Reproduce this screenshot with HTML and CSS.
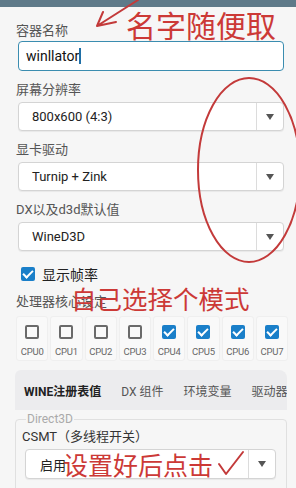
FILE: index.html
```html
<!DOCTYPE html>
<html lang="zh">
<head>
  <meta charset="UTF-8" />
  <meta name="viewport" content="width=device-width, initial-scale=1.0"/>
  <title>Container Settings</title>
  <link rel="stylesheet" href="styles.css">
</head>
<body>

  <div class="topbar"></div>

  <div class="settings">
    <div class="field-label first">容器名称</div>
    <div class="text-input">winllator<span class="caret"></span></div>

    <div class="field-label">屏幕分辨率</div>
    <div class="select"><span class="select-value">800x600 (4:3)</span><span class="select-arrow"></span></div>

    <div class="field-label">显卡驱动</div>
    <div class="select"><span class="select-value">Turnip + Zink</span><span class="select-arrow"></span></div>

    <div class="field-label">DX以及d3d默认值</div>
    <div class="select"><span class="select-value">WineD3D</span><span class="select-arrow"></span></div>

    <div class="check-row">
      <span class="checkbox checked"></span>
      <span class="check-text">显示帧率</span>
    </div>

    <div class="field-label cpu-title">处理器核心设定</div>
    <div class="cpu-grid">
      <div class="cpu-cell"><span class="checkbox"></span><span class="cpu-name">CPU0</span></div>
      <div class="cpu-cell"><span class="checkbox"></span><span class="cpu-name">CPU1</span></div>
      <div class="cpu-cell"><span class="checkbox"></span><span class="cpu-name">CPU2</span></div>
      <div class="cpu-cell"><span class="checkbox"></span><span class="cpu-name">CPU3</span></div>
      <div class="cpu-cell"><span class="checkbox checked"></span><span class="cpu-name">CPU4</span></div>
      <div class="cpu-cell"><span class="checkbox checked"></span><span class="cpu-name">CPU5</span></div>
      <div class="cpu-cell"><span class="checkbox checked"></span><span class="cpu-name">CPU6</span></div>
      <div class="cpu-cell"><span class="checkbox checked"></span><span class="cpu-name">CPU7</span></div>
    </div>

    <div class="tabs">
      <span class="tab active">WINE注册表值</span>
      <span class="tab">DX 组件</span>
      <span class="tab">环境变量</span>
      <span class="tab">驱动器(</span>
    </div>

    <fieldset class="group">
      <legend>Direct3D</legend>
      <div class="group-label">CSMT（多线程开关）</div>
      <div class="select small"><span class="select-value">启用</span><span class="select-arrow"></span></div>
    </fieldset>
  </div>

  <!-- hand-drawn notes on top of the screenshot -->
  <svg class="marks" width="296" height="488" viewBox="0 0 296 488">
    <path d="M138 0 L97 26 M97 26 L116 22 M97 26 L103 12" />
    <ellipse cx="249" cy="170" rx="51" ry="92" />
    <path d="M219 464 L226 474 L243 452" />
  </svg>
  <div class="note note-name">名字随便取</div>
  <div class="note note-mode">自己选择个模式</div>
  <div class="note note-click">设置好后点击</div>

</body>
</html>
```

FILE: styles.css
```css
body {
  margin: 0;
  width: 296px;
  height: 488px;
  overflow: hidden;
  position: relative;
  background: #f6f6f6;
  font-family: Roboto, "Noto Sans CJK SC", sans-serif;
  color: #333;
}

.topbar {
  height: 7px;
  background: #5f7a89;
}

.settings {
  padding: 0 9px 0 16px;
}

.field-label {
  font-size: 13px;
  line-height: 16px;
  color: #555;
  margin-top: 11px;
}

.field-label.first {
  margin-top: 16px;
}

.text-input {
  margin: 2px 0 0 2px;
  width: 266px;
  height: 30px;
  box-sizing: border-box;
  border: 1px solid #3b8db0;
  border-radius: 4px;
  background: #fff;
  padding-left: 7px;
  font-size: 14px;
  line-height: 28px;
  color: #111;
  display: flex;
  align-items: center;
}

.caret {
  display: inline-block;
  width: 2px;
  height: 16px;
  background: #1f6fa6;
}

.select {
  margin: 4px 0 0 2px;
  width: 266px;
  height: 29px;
  box-sizing: border-box;
  border: 1px solid #d4d4d4;
  border-radius: 4px;
  background: #fff;
  box-shadow: 0 1px 1px rgba(0,0,0,0.06);
  display: flex;
  align-items: center;
}

.select-value {
  flex: 1;
  padding-left: 13px;
  font-size: 13px;
  color: #222;
}

.select-arrow {
  width: 26px;
  height: 100%;
  border-left: 1px solid #dcdcdc;
  position: relative;
}

.select-arrow::after {
  content: "";
  position: absolute;
  left: 9px;
  top: 11px;
  border-left: 4.5px solid transparent;
  border-right: 4.5px solid transparent;
  border-top: 6px solid #555;
}

.check-row {
  display: flex;
  align-items: center;
  margin: 14px 0 0 5px;
  gap: 7px;
  height: 17px;
}

.check-text {
  font-size: 14px;
  color: #222;
}

.checkbox {
  width: 14px;
  height: 14px;
  box-sizing: border-box;
  border: 2px solid #6a6a6a;
  border-radius: 2px;
  position: relative;
  display: inline-block;
}

.checkbox.checked {
  border: none;
  background: #1a7fc9;
}

.checkbox.checked::after {
  content: "";
  position: absolute;
  left: 4px;
  top: 1px;
  width: 4px;
  height: 8px;
  border-right: 2px solid #fff;
  border-bottom: 2px solid #fff;
  transform: rotate(45deg);
}

.cpu-title {
  margin-top: 12px;
}

.cpu-grid {
  display: grid;
  grid-template-columns: repeat(8, 1fr);
  gap: 2px;
  margin-top: 6px;
  width: 272px;
}

.cpu-cell {
  height: 45px;
  background: #f9f9f9;
  border: 1px solid #efefef;
  border-radius: 3px;
  display: flex;
  flex-direction: column;
  align-items: center;
  padding-top: 8px;
  box-sizing: border-box;
}

.cpu-name {
  margin-top: 7px;
  font-size: 9.5px;
  color: #666;
  letter-spacing: -0.2px;
}

.tabs {
  margin: 9px 0 0 -1px;
  width: 272px;
  height: 40px;
  background: #ececee;
  border-radius: 6px 8px 0 0;
  display: flex;
  align-items: center;
  padding-left: 9px;
  gap: 20px;
  box-sizing: border-box;
  white-space: nowrap;
  overflow: hidden;
  position: relative;
}

.tab {
  font-size: 12px;
  color: #555;
}

.tab.active {
  font-weight: bold;
  color: #222;
  position: relative;
}

.tab.active::after {
  content: "";
  position: absolute;
  left: -9px;
  right: -10px;
  bottom: -15px;
  height: 3px;
  background: #2b6b8f;
}

.group {
  margin: 2px 0 0 -1px;
  width: 272px;
  height: 80px;
  box-sizing: border-box;
  border: 1px solid #e0e0e0;
  border-radius: 4px;
  padding: 0 9px 0 6px;
}

.group legend {
  font-size: 12px;
  color: #aaa;
  padding: 0 1px;
  margin-left: 4px;
}

.group-label {
  font-size: 13px;
  color: #333;
}

.select.small {
  margin: 4px 0 0 3px;
  width: 251px;
  height: 30px;
}

.select.small .select-value {
  padding-left: 14px;
}

.marks {
  position: absolute;
  left: 0;
  top: 0;
  fill: none;
  stroke: #c33a3a;
  stroke-width: 2;
  stroke-linecap: round;
  stroke-linejoin: round;
}

.note {
  position: absolute;
  color: #cc3936;
  font-family: "Noto Sans CJK SC", sans-serif;
  font-weight: 400;
  white-space: nowrap;
}

.note-name {
  left: 126px;
  top: 4px;
  font-size: 30px;
  line-height: 40px;
}

.note-mode {
  left: 71px;
  top: 280px;
  font-size: 25.5px;
  line-height: 36px;
}

.note-click {
  left: 63px;
  top: 446px;
  font-size: 25px;
  line-height: 36px;
}
```
